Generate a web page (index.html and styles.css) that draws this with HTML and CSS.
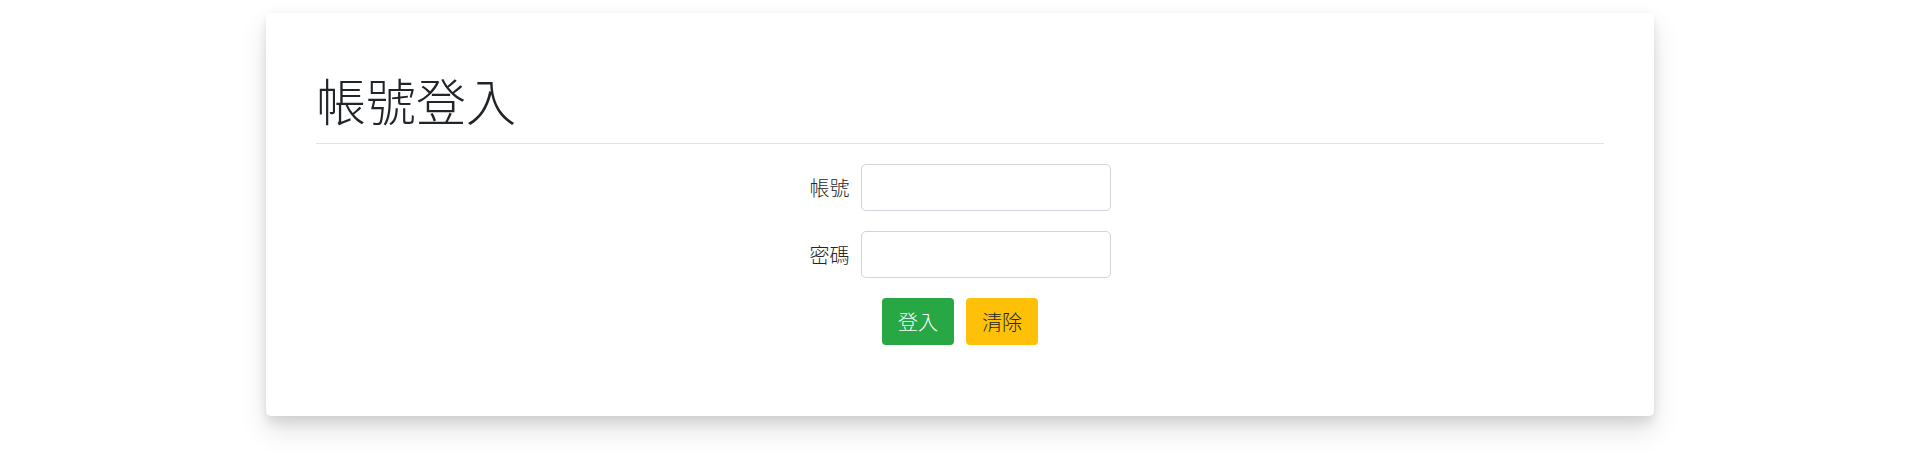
FILE: index.html
```html
<!DOCTYPE html>
<html lang="zh-Hant">
<head>
<meta charset="utf-8">
<title>帳號登入</title>
<link rel="stylesheet" href="styles.css">
</head>
<body>
<main class="page">
  <section class="card">
    <header class="card-head">
      <h1 class="title">帳號登入</h1>
    </header>
    <form class="login-form">
      <div class="form-row">
        <label class="label" for="acc">帳號</label>
        <input class="input" id="acc" type="text">
      </div>
      <div class="form-row">
        <label class="label" for="pwd">密碼</label>
        <input class="input" id="pwd" type="password">
      </div>
      <div class="form-row buttons">
        <button class="btn btn-green" type="button">登入</button>
        <button class="btn btn-yellow" type="button">清除</button>
      </div>
    </form>
  </section>
</main>
</body>
</html>
```

FILE: styles.css
```css
* { box-sizing: border-box; }

html, body {
  margin: 0;
  padding: 0;
  background: #fff;
  font-family: "Noto Sans CJK TC", "Noto Sans", sans-serif;
  color: #212529;
}

.page {
  padding-top: 13px;
  padding-bottom: 59px;
  min-height: 475px;
  display: flex;
  justify-content: center;
  align-items: flex-start;
}

.card {
  width: 1388px;
  height: 403px;
  background: #fff;
  border-radius: 5px;
  padding: 50px 50px 0;
  box-shadow: 0 14px 28px rgba(0, 0, 0, 0.12), 0 8px 10px rgba(0, 0, 0, 0.07), 0 0 8px rgba(0, 0, 0, 0.04);
}

.card-head {
  border-bottom: 1px solid #e2e2e2;
  padding-top: 6px;
  padding-bottom: 14px;
}

.title {
  margin: 0;
  font-size: 50px;
  font-weight: 300;
  line-height: 1.2;
  color: #212529;
}

.login-form {
  padding-top: 20px;
  display: flex;
  flex-direction: column;
  gap: 20px;
}

.form-row {
  display: flex;
  justify-content: center;
  align-items: center;
  gap: 11px;
}

.label {
  font-size: 20px;
  font-weight: 300;
  line-height: 1;
  color: #212529;
}

.input {
  width: 250px;
  height: 47px;
  border: 1px solid #ced4da;
  border-radius: 5px;
  background: #fff;
  font-size: 18px;
  padding: 6px 12px;
}

.buttons {
  gap: 12px;
}

.btn {
  width: 72px;
  height: 47px;
  border: none;
  border-radius: 4px;
  font-family: "Noto Sans CJK TC", "Noto Sans", sans-serif;
  font-size: 20px;
  font-weight: 300;
  line-height: 1;
  padding: 0;
}

.btn-green {
  background: #28a745;
  color: #fff;
}

.btn-yellow {
  background: #ffc107;
  color: #212529;
}
```
